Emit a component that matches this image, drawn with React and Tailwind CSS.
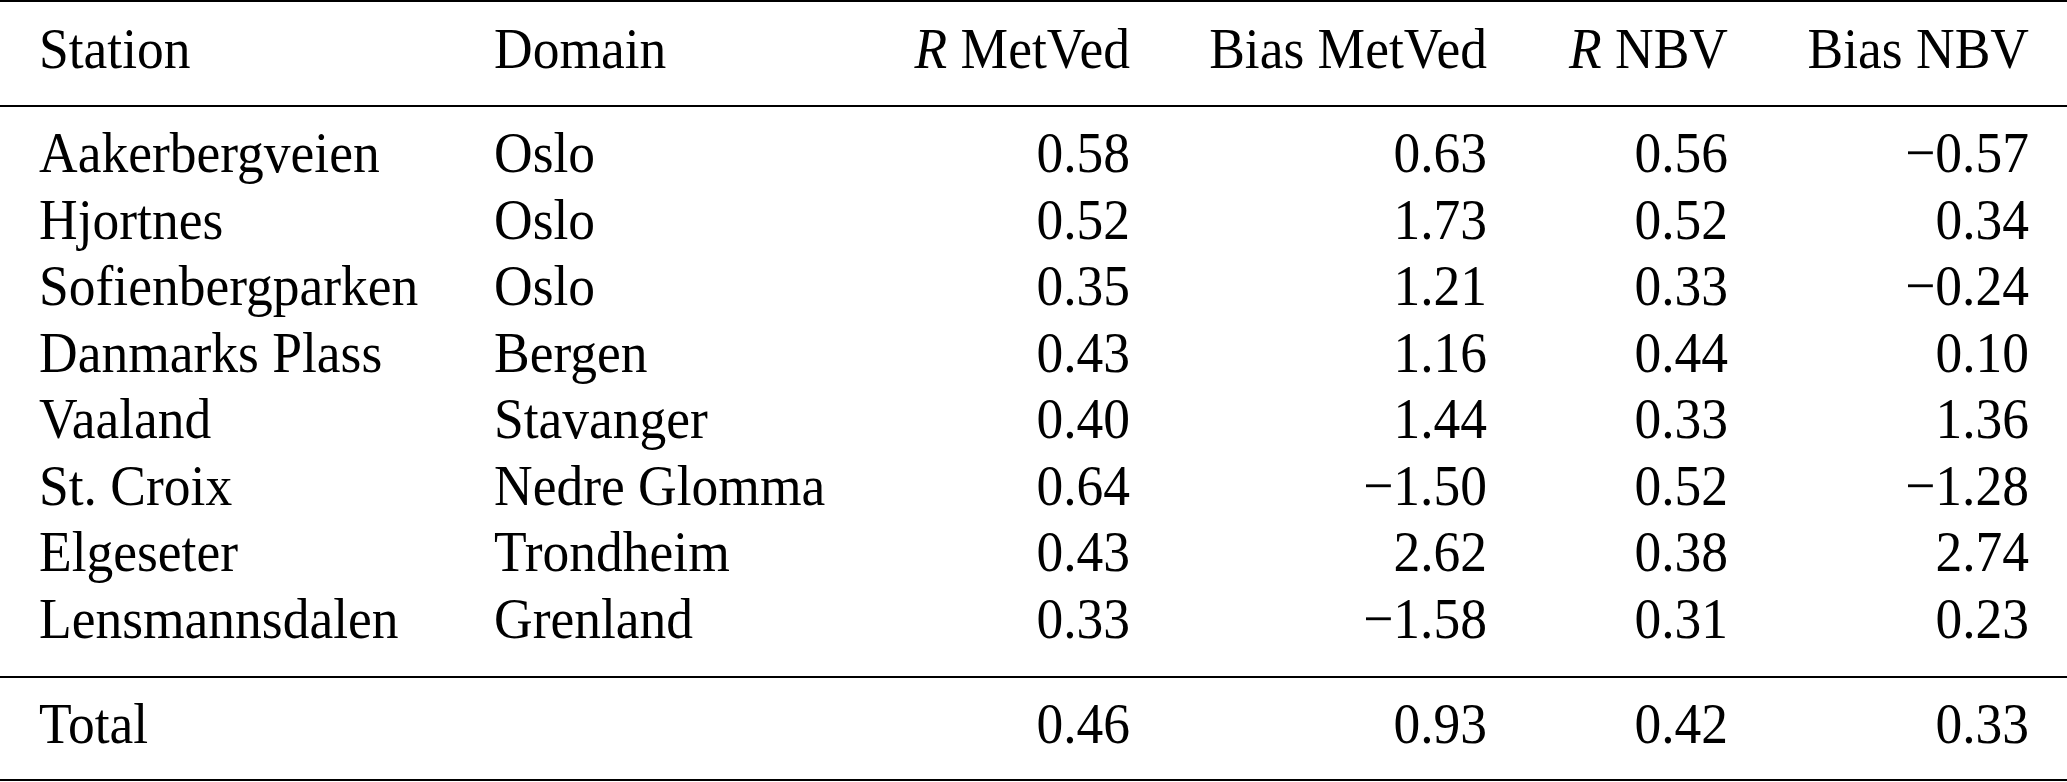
// Tabela de correlação e viés por estação (MetVed x NBV)
const linhas = [
  ["Aakerbergveien", "Oslo", "0.58", "0.63", "0.56", "−0.57"],
  ["Hjortnes", "Oslo", "0.52", "1.73", "0.52", "0.34"],
  ["Sofienbergparken", "Oslo", "0.35", "1.21", "0.33", "−0.24"],
  ["Danmarks Plass", "Bergen", "0.43", "1.16", "0.44", "0.10"],
  ["Vaaland", "Stavanger", "0.40", "1.44", "0.33", "1.36"],
  ["St. Croix", "Nedre Glomma", "0.64", "−1.50", "0.52", "−1.28"],
  ["Elgeseter", "Trondheim", "0.43", "2.62", "0.38", "2.74"],
  ["Lensmannsdalen", "Grenland", "0.33", "−1.58", "0.31", "0.23"],
];

const total = ["Total", "", "0.46", "0.93", "0.42", "0.33"];

// mesma grade para cabeçalho e linhas
const grade =
  "grid grid-cols-[455px_400px_236px_357px_241px_301px] pl-[39px] leading-[66.5px] h-[66.5px] whitespace-nowrap scale-y-[1.07]";

// Linha da tabela: duas colunas à esquerda, quatro numéricas à direita
function Linha({ cells }) {
  return (
    <div className={grade}>
      <div>{cells[0]}</div>
      <div>{cells[1]}</div>
      <div className="text-right">{cells[2]}</div>
      <div className="text-right">{cells[3]}</div>
      <div className="text-right">{cells[4]}</div>
      <div className="text-right">{cells[5]}</div>
    </div>
  );
}

export default function App() {
  return (
    <div
      className="w-[2067px] h-[782px] bg-white text-black text-[53.5px]"
      style={{ fontFamily: '"Liberation Serif", "Times New Roman", serif' }}
    >
      {/* toprule */}
      <div className="h-[2px] bg-black" />

      {/* Cabeçalho */}
      <div className="pt-[14px] pb-[22.5px]">
        <div className={grade}>
          <div>Station</div>
          <div>Domain</div>
          <div className="text-right"><i>R</i> MetVed</div>
          <div className="text-right">Bias MetVed</div>
          <div className="text-right"><i>R</i> NBV</div>
          <div className="text-right">Bias NBV</div>
        </div>
      </div>

      {/* midrule */}
      <div className="h-[2px] bg-black" />

      {/* Estações */}
      <div className="pt-[13px] pb-[24px]">
        {linhas.map((l) => (
          <Linha key={l[0]} cells={l} />
        ))}
      </div>

      <div className="h-[2px] bg-black" />

      {/* Total */}
      <div className="pt-[13px] pb-[21px]">
        <Linha cells={total} />
      </div>

      {/* bottomrule */}
      <div className="h-[2px] bg-black" />
    </div>
  );
}
